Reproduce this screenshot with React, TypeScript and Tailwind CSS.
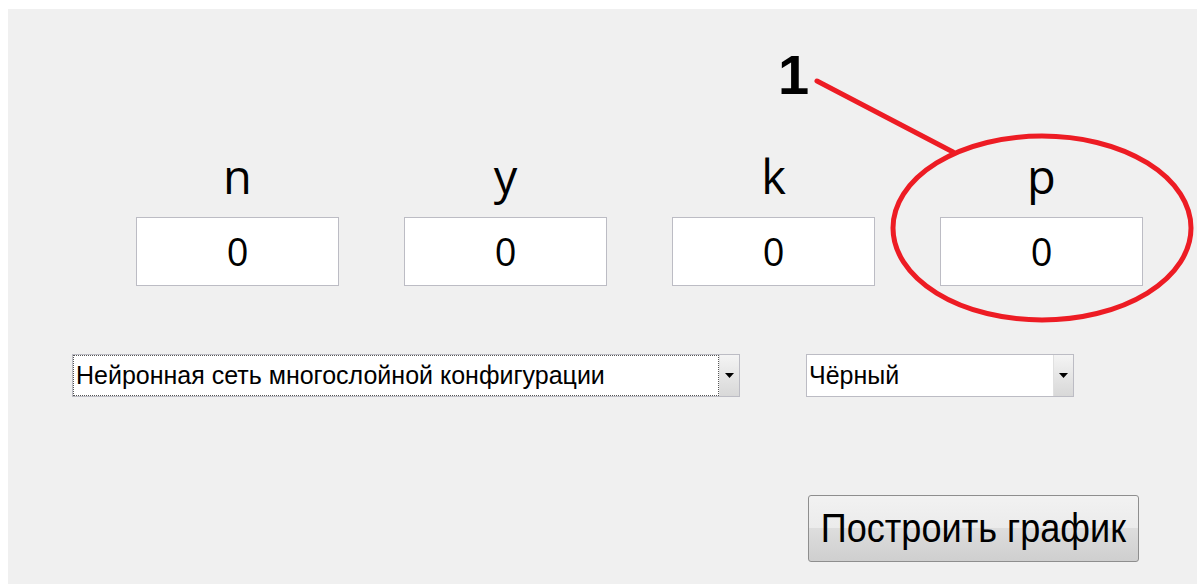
import React from 'react';

const fields = ['n', 'y', 'k', 'p'];

function ComboBox({ value, width, focused }: { value: string; width: string; focused?: boolean }) {
  return (
    <div className={`${width} h-[43px] flex bg-white border border-[#bcbcc4]`}>
      <div
        className={`flex-1 flex items-center pl-[2px] text-[25px] text-black whitespace-nowrap ${
          focused ? 'border border-dotted border-[#555]' : ''
        }`}
        style={{ fontFamily: '"Liberation Sans", Arial, sans-serif' }}
      >
        {value}
      </div>
      <div className="w-[20px] flex items-center justify-center bg-gradient-to-b from-[#f4f4f4] to-[#d8d8d8] border-l border-[#e0e0e0]">
        <svg width="9" height="5" viewBox="0 0 9 5">
          <path d="M0 0h9L4.5 5z" fill="#000" />
        </svg>
      </div>
    </div>
  );
}

export default function App() {
  return (
    <div className="w-full h-[584px] bg-white pt-[9px] pl-[8px] overflow-hidden">
      <div className="relative h-full bg-[#f0f0f0]" style={{ fontFamily: '"Open Sans", sans-serif' }}>
        {/* parameter inputs */}
        <div className="flex gap-[65px] pl-[128px] pt-[139px]">
          {fields.map((f) => (
            <div key={f} className="w-[203px] flex flex-col items-center">
              <div className="h-[56px] text-[47px] leading-[56px] text-black">{f}</div>
              <div className="mt-[13px] w-full h-[69px] bg-white border border-[#bcbcc4] flex items-center justify-center text-[38px] text-black">
                0
              </div>
            </div>
          ))}
        </div>

        {/* network type and colour */}
        <div className="flex gap-[66px] pl-[64px] mt-[68px]">
          <ComboBox value="Нейронная сеть многослойной конфигурации" width="w-[668px]" focused />
          <ComboBox value="Чёрный" width="w-[268px]" />
        </div>

        <div className="flex pl-[800px] mt-[98px]">
          <button
            className="w-[331px] h-[67px] rounded-[3px] border border-[#8e8e8e] bg-[linear-gradient(#f2f2f2_0%,#ebebeb_50%,#dddddd_50%,#cfcfcf_100%)] text-black flex items-center justify-center overflow-hidden"
            style={{ fontFamily: '"Liberation Sans", Arial, sans-serif' }}
          >
            <span className="inline-block whitespace-nowrap text-[41px] leading-none scale-x-[0.88]">Построить график</span>
          </button>
        </div>

        {/* callout marker */}
        <div
          className="absolute left-[770px] top-[38px] text-[56px] font-bold leading-none text-black"
          style={{ fontFamily: '"Liberation Sans", Arial, sans-serif' }}
        >
          1
        </div>
        <svg className="absolute left-0 top-0 pointer-events-none" width="1189" height="575">
          <path d="M809 72 L945 143" stroke="#ed1c24" strokeWidth="5" strokeLinecap="round" fill="none" />
          <ellipse cx="1034" cy="219" rx="149" ry="92" stroke="#ed1c24" strokeWidth="5" fill="none" />
        </svg>
      </div>
    </div>
  );
}
